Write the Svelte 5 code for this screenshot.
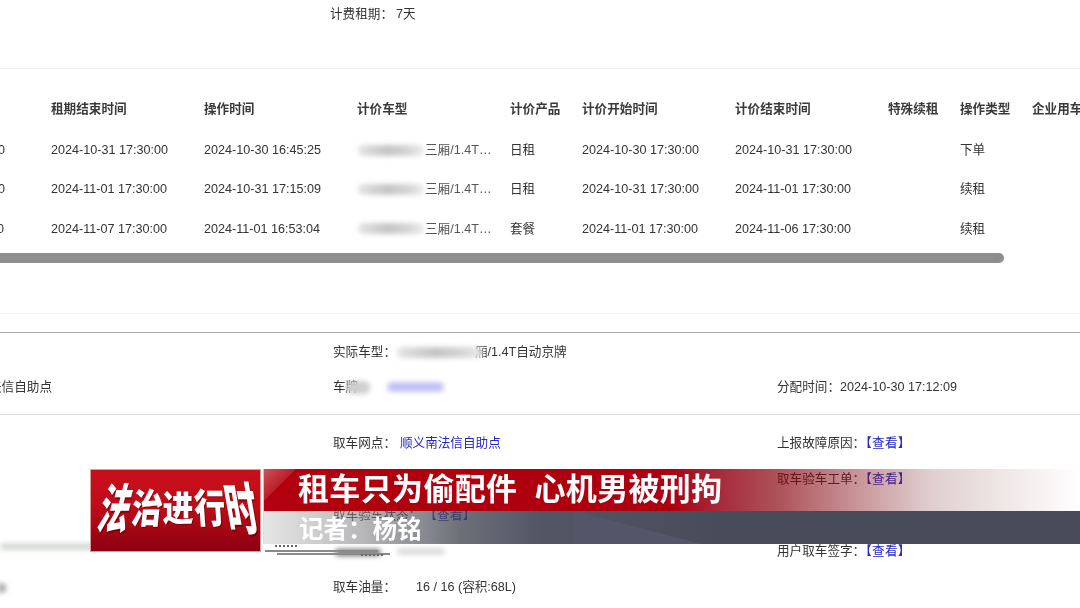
<script lang="ts">
  const columns = ['', '租期结束时间', '操作时间', '计价车型', '计价产品', '计价开始时间', '计价结束时间', '特殊续租', '操作类型', '企业用车']
  const rows = [
    { start: '2024-10-30 17:30:00', end: '2024-10-31 17:30:00', op: '2024-10-30 16:45:25', product: '日租', from: '2024-10-30 17:30:00', to: '2024-10-31 17:30:00', type: '下单' },
    { start: '2024-10-31 17:30:00', end: '2024-11-01 17:30:00', op: '2024-10-31 17:15:09', product: '日租', from: '2024-10-31 17:30:00', to: '2024-11-01 17:30:00', type: '续租' },
    { start: '2024-11-01 17:30:00', end: '2024-11-07 17:30:00', op: '2024-11-01 16:53:04', product: '套餐', from: '2024-11-01 17:30:00', to: '2024-11-06 17:30:00', type: '续租' }
  ]
  const logo = ['法', '治', '进', '行', '时']
</script>

{#snippet view(cls = '')}
  <a href="#top" class="view {cls}">【查看】</a>
{/snippet}

<div class="page">
  <div class="top">计费租期：<span class="days">7天</span></div>

  <section class="table-wrap">
    <div class="grid head">
      {#each columns as col}
        <div class="cell">{col}</div>
      {/each}
    </div>
    {#each rows as row}
      <div class="grid row">
        <div class="cell">{row.start}</div>
        <div class="cell">{row.end}</div>
        <div class="cell">{row.op}</div>
        <div class="cell model"><i class="smear"></i><span>三厢/1.4T…</span></div>
        <div class="cell">{row.product}</div>
        <div class="cell">{row.from}</div>
        <div class="cell">{row.to}</div>
        <div class="cell"></div>
        <div class="cell">{row.type}</div>
        <div class="cell"></div>
      </div>
    {/each}
    <div class="scrollbar"></div>
  </section>

  <section class="info first">
    <div class="info-row">
      <div class="c1 colon">：</div>
      <div class="c2 model2">实际车型：<i class="smear wide"></i><span>厢/1.4T自动京牌</span></div>
      <div class="c3"></div>
    </div>
    <div class="info-row">
      <div class="c1 cut">法信自助点</div>
      <div class="c2 plate">车牌<i class="smear short"></i><i class="smear blue"></i></div>
      <div class="c3">分配时间：2024-10-30 17:12:09</div>
    </div>
  </section>

  <section class="info second">
    <div class="info-row">
      <div class="c1"></div>
      <div class="c2">取车网点：<a href="#top" class="gap">顺义南法信自助点</a></div>
      <div class="c3">上报故障原因：{@render view()}</div>
    </div>
    <div class="info-row">
      <div class="c1"></div>
      <div class="c2"></div>
      <div class="c3">取车验车工单：{@render view()}</div>
    </div>
    <div class="info-row">
      <div class="c1"></div>
      <div class="c2">取车验车状态：{@render view('gap2')}</div>
      <div class="c3"></div>
    </div>
    <div class="info-row">
      <div class="c1"><i class="smear left"></i></div>
      <div class="c2"></div>
      <div class="c3">用户取车签字：{@render view()}</div>
    </div>
    <div class="info-row">
      <div class="c1"><i class="smear dot"></i></div>
      <div class="c2">取车油量：<span class="fuel">16 / 16 (容积:68L)</span></div>
      <div class="c3"></div>
    </div>
  </section>

  <div class="lower-third">
    <div class="logo">
      <div class="logo-text">
        {#each logo as ch, i}
          <span class="ch ch{i}">{ch}</span>
        {/each}
      </div>
    </div>
    <div class="banner">
      <div class="title">租车只为偷配件<span class="title-gap"></span>心机男被刑拘</div>
      <div class="reporter">记者：杨铭</div>
      <div class="ticks">
        <i class="blot dark"></i>
        <i class="blot light"></i>
        <i class="line a"></i>
        <i class="line b"></i>
        <i class="dots da"></i>
        <i class="dots db"></i>
      </div>
    </div>
  </div>
</div>

<style>
  :global(body) {
    margin: 0;
    background: #fff;
  }

  .page {
    position: relative;
    width: 1080px;
    height: 608px;
    overflow: hidden;
    background: #fff;
    color: #333;
    font: 12.6px/16px "Liberation Sans", "Noto Sans CJK SC", sans-serif;
    filter: blur(0.45px);
  }

  .top {
    height: 69px;
    box-sizing: border-box;
    padding: 6px 0 0 330px;
    border-bottom: 1px solid #f0f0f0;
  }

  .days {
    margin-left: 3px;
  }

  .table-wrap {
    height: 245px;
    box-sizing: border-box;
    padding-top: 32px;
    border-bottom: 1px solid #f2f2f2;
  }

  .grid {
    display: grid;
    grid-template-columns: 163px 153px 153px 153px 72px 153px 153px 72px 72px 80px;
    margin-left: -112px;
    white-space: nowrap;
  }

  .head {
    height: 41px;
    font-weight: 700;
    color: #3a3a3a;
  }

  .row {
    height: 39.4px;
    align-items: start;
  }

  .model {
    display: flex;
    align-items: center;
    color: #555;
  }

  .model span {
    margin-left: 1px;
  }

  .smear {
    display: block;
    flex: none;
    height: 11px;
    border-radius: 6px;
    background: linear-gradient(90deg, #e4e4e4, #c4c4c4 45%, #d4d4d4 75%, #ececec);
    filter: blur(2.5px);
  }

  .model .smear {
    width: 66px;
    margin-left: 1px;
  }

  .scrollbar {
    width: 1010px;
    height: 10px;
    margin: -7px 0 0 -6px;
    border-radius: 5px;
    background: #8e8e8e;
  }

  .info {
    box-sizing: border-box;
  }

  .first {
    height: 83px;
    margin-top: 18px;
    padding-top: 11px;
    border-top: 1px solid #a8a8a8;
    border-bottom: 1px solid #ddd;
  }

  .first .info-row {
    height: 35px;
  }

  .second {
    padding-top: 20px;
  }

  .second .info-row {
    height: 36px;
  }

  .info-row {
    display: grid;
    grid-template-columns: 333px 444px 1fr;
    align-items: start;
    white-space: nowrap;
  }

  .c1.colon {
    margin-left: -9px;
  }

  .c1.cut {
    margin-left: -11px;
  }

  .model2, .plate {
    display: flex;
    align-items: center;
  }

  .smear.wide {
    width: 86px;
    margin-left: 1px;
  }

  .model2 span {
    margin-left: -8px;
  }

  .smear.short {
    width: 24px;
    height: 13px;
    margin-left: -12px;
    background: #cfcfcf;
  }

  .smear.blue {
    width: 57px;
    height: 10px;
    margin-left: 17px;
    background: #c2c2f6;
  }

  .smear.left {
    width: 95px;
    height: 7px;
    background: #d5dad5;
  }

  .smear.dot {
    width: 8px;
    height: 10px;
    background: #aaa;
    margin-left: -2px;
    margin-top: 4px;
  }

  a {
    color: #2626c4;
    text-decoration: none;
  }

  .view {
    display: inline-block;
    font-feature-settings: "palt";
    letter-spacing: 0.5px;
  }

  .gap {
    margin-left: 4px;
  }

  .gap2 {
    margin-left: 9px;
  }

  .fuel {
    margin-left: 20px;
  }

  .lower-third {
    position: absolute;
    left: 90px;
    top: 469px;
    display: flex;
    gap: 2px;
    width: 990px;
    height: 83px;
    font-family: "Noto Sans CJK SC", sans-serif;
  }

  .logo {
    flex: none;
    width: 171px;
    height: 83px;
    box-sizing: border-box;
    border: 1px solid #d99;
    background: linear-gradient(180deg, #c8101c 0%, #c00c18 45%, #8c0010 100%);
    overflow: hidden;
  }

  .logo-text {
    display: flex;
    justify-content: center;
    align-items: center;
    height: 66px;
    padding: 5px 0 0 5px;
    box-sizing: border-box;
    color: #fff;
    font-size: 31px;
    font-weight: 900;
    line-height: 1;
  }

  .ch {
    display: block;
    width: 31px;
    text-align: center;
    text-shadow: 1px 1px 0 rgba(70, 0, 0, 0.5);
  }

  .ch0 { transform: skewX(-14deg) scaleY(1.7); }
  .ch1 { transform: skewX(-6deg) scaleY(1.3); }
  .ch2 { transform: scaleY(1.15); }
  .ch3 { transform: skewX(4deg) scaleY(1.3); }
  .ch4 { transform: skewX(10deg) scaleY(1.85); }

  .banner {
    position: relative;
    flex: 1;
    min-width: 0;
  }

  .title {
    height: 42px;
    box-sizing: border-box;
    padding-left: 34px;
    color: #fff;
    font-size: 31px;
    font-weight: 700;
    line-height: 36px;
    letter-spacing: 0.35px;
    white-space: nowrap;
    border-left: 1px solid #e8b8b8;
    background:
      linear-gradient(135deg, rgba(255, 255, 255, 0.32) 0, rgba(255, 255, 255, 0.12) 22px, transparent 23px),
      linear-gradient(90deg, #b2000e 0%, #ac0010 50%, rgba(150, 0, 20, 0.85) 55%, rgba(135, 0, 10, 0.68) 63%, rgba(130, 10, 20, 0.45) 72%, rgba(120, 40, 40, 0.22) 82%, rgba(150, 120, 120, 0) 100%);
  }

  .title-gap {
    display: inline-block;
    width: 17px;
  }

  .reporter {
    height: 33px;
    box-sizing: border-box;
    padding-left: 35px;
    color: #fff;
    font-size: 24.5px;
    font-weight: 700;
    line-height: 33px;
    white-space: nowrap;
    border-left: 1px solid #ddd;
    background:
      linear-gradient(to top right, #525668 50%, transparent 50%) 310px 0 / 127px 33px no-repeat,
      linear-gradient(90deg, rgba(172, 172, 172, 0.3) 0%, rgba(150, 150, 152, 0.42) 5%, rgba(126, 126, 130, 0.55) 12%, rgba(61, 64, 76, 0.75) 24%, rgba(72, 76, 92, 0.95) 34%, #474a58 60%, #474a58 100%);
  }

  .ticks {
    position: relative;
    height: 8px;
  }

  .line {
    position: absolute;
    height: 1.5px;
    background: #8a8a8a;
  }

  .line.a {
    left: 2px;
    top: 6px;
    width: 113px;
  }

  .line.b {
    left: 14px;
    top: 9px;
    width: 113px;
  }

  .dots {
    position: absolute;
    height: 2px;
    width: 24px;
    background: repeating-linear-gradient(90deg, #666 0 2px, transparent 2px 4px);
  }

  .dots.da {
    left: 12px;
    top: 1px;
  }

  .dots.db {
    left: 98px;
    top: 10px;
  }

  .blot {
    position: absolute;
    display: block;
    height: 7px;
    border-radius: 4px;
    filter: blur(2.5px);
  }

  .blot.dark {
    left: 72px;
    top: 5px;
    width: 46px;
    background: #777;
  }

  .blot.light {
    left: 134px;
    top: 4px;
    width: 48px;
    background: #ddd;
  }
</style>
